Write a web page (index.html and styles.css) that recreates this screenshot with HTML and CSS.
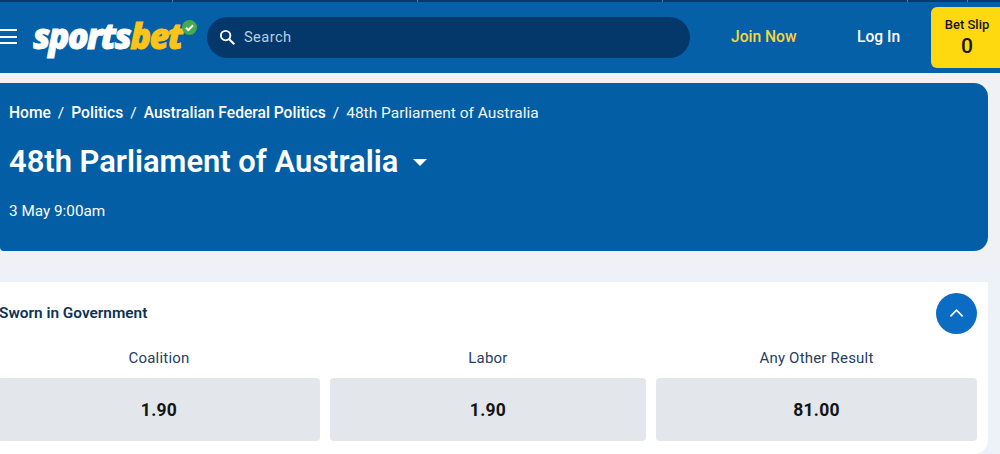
FILE: index.html
```html
<!DOCTYPE html>
<html lang="en">
<head>
<meta charset="utf-8">
<title>48th Parliament of Australia</title>
<link rel="stylesheet" href="styles.css">
</head>
<body>
<div class="topstrip"><i></i><i></i><i></i><i></i><i></i></div>
<header class="header">
  <button class="menu" aria-label="Menu"><span></span><span></span><span></span></button>
  <a class="logo"><span class="w">sports</span><span class="y">bet</span>
    <svg class="tick" viewBox="0 0 16 16"><circle cx="8" cy="8" r="8" fill="#46a94d"/><path d="M4.2 8.2l2.6 2.5 5-5" fill="none" stroke="#fff" stroke-width="2.2"/></svg>
  </a>
  <div class="search">
    <svg class="glass" viewBox="0 0 18 18"><circle cx="7" cy="7" r="5" fill="none" stroke="#fff" stroke-width="2"/><path d="M10.8 10.8l5.4 5.4" stroke="#fff" stroke-width="2.2"/></svg>
    <span>Search</span>
  </div>
  <a class="join">Join Now</a>
  <a class="login">Log In</a>
  <div class="slip"><span class="slip-label">Bet Slip</span><span class="slip-count">0</span></div>
</header>
<main class="main">
  <section class="hero">
    <nav class="crumbs"><b>Home</b><em>/</em><b>Politics</b><em>/</em><b>Australian Federal Politics</b><em>/</em><span>48th Parliament of Australia</span></nav>
    <h1 class="title">48th Parliament of Australia<i class="caret"></i></h1>
    <p class="date">3 May 9:00am</p>
  </section>
  <section class="card">
    <div class="card-head">
      <h2>Sworn in Government</h2>
      <button class="collapse" aria-label="Collapse"><svg viewBox="0 0 16 10"><path d="M1.5 8.5L8 2l6.5 6.5" fill="none" stroke="#fff" stroke-width="1.8"/></svg></button>
    </div>
    <div class="odds">
      <div class="col"><div class="name">Coalition</div><div class="price">1.90</div></div>
      <div class="col"><div class="name">Labor</div><div class="price">1.90</div></div>
      <div class="col"><div class="name">Any Other Result</div><div class="price">81.00</div></div>
    </div>
  </section>
</main>
</body>
</html>
```
FILE: styles.css
```css
* { box-sizing: border-box; }
html, body { margin: 0; height: 454px; overflow: hidden; }
body { background: #edf1f8; font-family: Roboto, "Liberation Sans", sans-serif; color: #0f3355; }
.topstrip { height: 2px; background: #063a6e; display: flex; gap: 244px; padding-left: 172px; }
.topstrip i { width: 1px; background: #4f7ea8; }
.topstrip i:last-child { margin-left: -185px; }
.header { height: 71px; background: #0560a8; display: flex; align-items: center; position: relative; }
.menu { width: 17px; height: 15px; padding: 0; margin: -2px 0 0 0; border: 0; background: none; display: flex; flex-direction: column; justify-content: space-between; }
.menu span { display: block; height: 2px; background: #fff; }
.logo { display: flex; align-items: baseline; position: relative; margin: -4px 0 0 16px; width: 172px; font-family: "Open Sans", sans-serif; font-style: italic; font-weight: 800; font-size: 34.5px; letter-spacing: -1.7px; line-height: 40px; }
.logo .w { color: #fff; -webkit-text-stroke: .8px #fff; }
.logo .y { color: #fcc419; -webkit-text-stroke: .8px #fcc419; }
.tick { position: absolute; width: 15px; height: 15px; left: 149px; top: 4px; }
.search { width: 483px; height: 41px; margin: -1px 0 0 2px; border-radius: 21px; background: #04386b; display: flex; align-items: center; padding-left: 12px; color: #b9cfe4; font-size: 14.7px; letter-spacing: .4px; }
.glass { width: 17px; height: 17px; margin-right: 8px; }
.join { margin: -1px 0 0 41px; width: 126px; color: #f5d63a; font-weight: 500; font-size: 15.6px; }
.login { margin-top: -1px; width: 74px; color: #fff; font-weight: 500; font-size: 15.6px; }
.slip { width: 69px; height: 61px; margin-top: -1px; background: #ffd90f; border-radius: 6px 0 0 6px; display: flex; flex-direction: column; align-items: center; color: #151515; padding: 10px 0 0 3px; }
.slip-label { font-size: 13px; font-weight: 500; line-height: 16px; }
.slip-count { font-size: 21px; font-weight: 500; line-height: 27px; }
.main { background: linear-gradient(#f0f1f5 0, #f0f1f5 190px, #edf1f8 200px); padding-top: 10px; height: 381px; }
.hero { width: 988px; height: 168px; background: #035ea6; border-radius: 0 14px 14px 4px; padding: 20px 0 0 9px; color: #fff; }
.crumbs { font-size: 15.5px; line-height: 20px; display: flex; }
.crumbs b { font-weight: 500; font-size: 15.6px; }
.crumbs em { font-style: normal; margin: 0 7px; font-weight: 400; }
.crumbs span { font-weight: 400; opacity: .95; }
.title { margin: 20px 0 0; font-size: 30.9px; line-height: 38px; font-weight: 600; display: flex; align-items: center; }
.caret { width: 0; height: 0; border: 7.5px solid transparent; border-top: 7.5px solid #fff; border-bottom: 0; margin: 1px 0 0 15px; }
.date { margin: 20px 0 0; font-size: 15.3px; line-height: 20px; }
.card { width: 988px; height: 172px; margin-top: 31px; background: #fff; border-radius: 0 0 14px 0; padding: 10px 11px 0 0; }
.card-head { display: flex; justify-content: space-between; align-items: center; height: 42px; }
.card-head h2 { margin: 0 0 0 -1px; font-size: 15.4px; font-weight: 600; color: #0b3357; }
.collapse { width: 41px; height: 41px; padding: 0; border: 0; border-radius: 50%; background: #0a6cc2; display: flex; align-items: center; justify-content: center; }
.collapse svg { width: 15px; height: 10px; }
.odds { display: grid; grid-template-columns: 322px 316px 321px; gap: 10px; margin: 14px 0 0 -2px; }
.name { text-align: center; font-size: 15px; line-height: 20px; color: #26415f; letter-spacing: .2px; }
.price { height: 63px; margin-top: 10px; background: #e3e6eb; border-radius: 4px; display: flex; align-items: center; justify-content: center; font-size: 17.5px; font-weight: 700; color: #141414; letter-spacing: .3px; }
```
